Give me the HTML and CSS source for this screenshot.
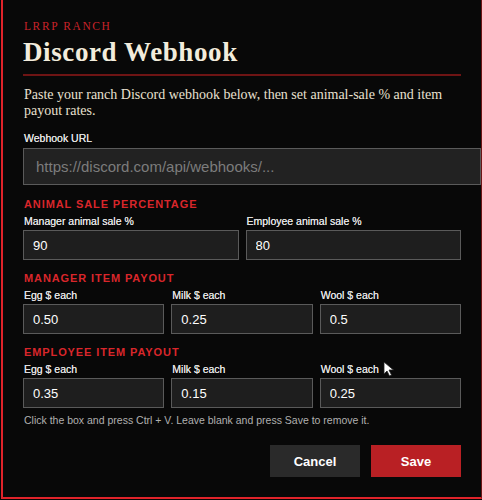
FILE: index.html
```html
<!DOCTYPE html>
<html lang="en">
<head>
    <meta charset="UTF-8">
    <meta name="viewport" content="width=device-width, initial-scale=1.0">
    <title>Discord Webhook</title>
    <link rel="stylesheet" href="styles.css">
</head>
<body>
    <div class="modal">
        <header>
            <p class="eyebrow">LRRP Ranch</p>
            <h1>Discord Webhook</h1>
        </header>
        <p class="intro">Paste your ranch Discord webhook below, then set animal-sale % and item payout rates.</p>

        <label class="field-label" for="webhookUrl">Webhook URL</label>
        <input type="text" id="webhookUrl" class="url-input" placeholder="https://discord.com/api/webhooks/...">

        <h2 class="section-title">Animal Sale Percentage</h2>
        <div class="row two">
            <div class="field">
                <label class="field-label" for="mgrSale">Manager animal sale %</label>
                <input type="text" id="mgrSale" value="90">
            </div>
            <div class="field">
                <label class="field-label" for="empSale">Employee animal sale %</label>
                <input type="text" id="empSale" value="80">
            </div>
        </div>

        <h2 class="section-title">Manager Item Payout</h2>
        <div class="row three">
            <div class="field">
                <label class="field-label" for="mgrEgg">Egg $ each</label>
                <input type="text" id="mgrEgg" value="0.50">
            </div>
            <div class="field">
                <label class="field-label" for="mgrMilk">Milk $ each</label>
                <input type="text" id="mgrMilk" value="0.25">
            </div>
            <div class="field">
                <label class="field-label" for="mgrWool">Wool $ each</label>
                <input type="text" id="mgrWool" value="0.5">
            </div>
        </div>

        <h2 class="section-title">Employee Item Payout</h2>
        <div class="row three">
            <div class="field">
                <label class="field-label" for="empEgg">Egg $ each</label>
                <input type="text" id="empEgg" value="0.35">
            </div>
            <div class="field">
                <label class="field-label" for="empMilk">Milk $ each</label>
                <input type="text" id="empMilk" value="0.15">
            </div>
            <div class="field">
                <label class="field-label" for="empWool">Wool $ each</label>
                <input type="text" id="empWool" value="0.25">
            </div>
        </div>

        <p class="hint">Click the box and press Ctrl + V. Leave blank and press Save to remove it.</p>

        <div class="actions">
            <button class="btn cancel">Cancel</button>
            <button class="btn save">Save</button>
        </div>
    </div>

    <!-- mouse pointer -->
    <svg class="pointer" width="14" height="16" viewBox="0 0 14 16">
        <path d="M1 1 L1 13 L4 10 L6.5 15 L8.5 14 L6 9 L10.5 9 Z" fill="#fff" stroke="#222" stroke-width="0.8"/>
    </svg>
</body>
</html>
```

FILE: styles.css
```css
body {
    margin: 0;
    padding: 0;
    background: #070707;
    font-family: "Liberation Sans", Arial, sans-serif;
    overflow: hidden;
}

.modal {
    box-sizing: border-box;
    width: 481px;
    margin-left: 1px;
    padding: 19px 20px 20px 20px;
    background: #080808;
    border-left: 2px solid #e0232a;
    border-right: 1px solid #6d1515;
    border-bottom: 2px solid #e0232a;
}

header {
    border-bottom: 2px solid #6e1414;
    padding-bottom: 6px;
}

.eyebrow {
    margin: 0 0 3px 1px;
    font-family: "Liberation Serif", Georgia, serif;
    font-size: 11.5px;
    line-height: 14px;
    letter-spacing: 1.6px;
    text-transform: uppercase;
    color: #c9232a;
}

header h1 {
    margin: 0;
    font-family: "Liberation Serif", Georgia, serif;
    font-size: 27px;
    line-height: 32px;
    font-weight: bold;
    letter-spacing: 0.6px;
    color: #f2ecdc;
}

.intro {
    margin: 11px 0 13px 1px;
    font-family: "Liberation Serif", Georgia, serif;
    font-size: 14px;
    line-height: 16px;
    color: #e8e0d0;
}

.field-label {
    display: block;
    margin: 0 0 2px 1px;
    font-size: 10.5px;
    line-height: 13px;
    color: #e2e2e2;
    text-shadow: 0 0 0.4px #e2e2e2;
}

input {
    box-sizing: border-box;
    width: 100%;
    height: 30px;
    margin: 0;
    padding: 0 9px;
    background: #1e1e1e;
    border: 1px solid #5a5a5a;
    border-radius: 0;
    color: #fff;
    font-family: "Liberation Sans", Arial, sans-serif;
    font-size: 13px;
    outline: none;
}

.url-input {
    box-sizing: content-box;
    height: 35px;
    margin: 1px 0 1px 0;
    padding: 0 6px 0 12px;
    background: #222;
    font-size: 15px;
}

.url-input::placeholder {
    color: #7c7c7c;
}

.section-title {
    margin: 12px 0 4px 1px;
    font-size: 11px;
    line-height: 13px;
    font-weight: bold;
    letter-spacing: 0.9px;
    text-transform: uppercase;
    color: #d9262b;
}

.row {
    display: grid;
    gap: 7px;
}

.row.two {
    grid-template-columns: 1fr 1fr;
}

.row.three {
    grid-template-columns: 1fr 1fr 1fr;
}

.field {
    display: flex;
    flex-direction: column;
}

.hint {
    margin: 6px 0 0 1px;
    font-size: 10.5px;
    line-height: 13px;
    color: #b0b0b0;
}

.actions {
    display: flex;
    justify-content: flex-end;
    gap: 11px;
    margin-top: 18px;
}

.btn {
    width: 90px;
    height: 32px;
    border: none;
    border-radius: 0;
    color: #fff;
    font-family: "Liberation Sans", Arial, sans-serif;
    font-size: 13px;
    font-weight: bold;
    cursor: pointer;
}

.btn.cancel {
    background: #2a2a2a;
}

.btn.save {
    background: #b92024;
}

.pointer {
    position: absolute;
    left: 383px;
    top: 361px;
}
```
